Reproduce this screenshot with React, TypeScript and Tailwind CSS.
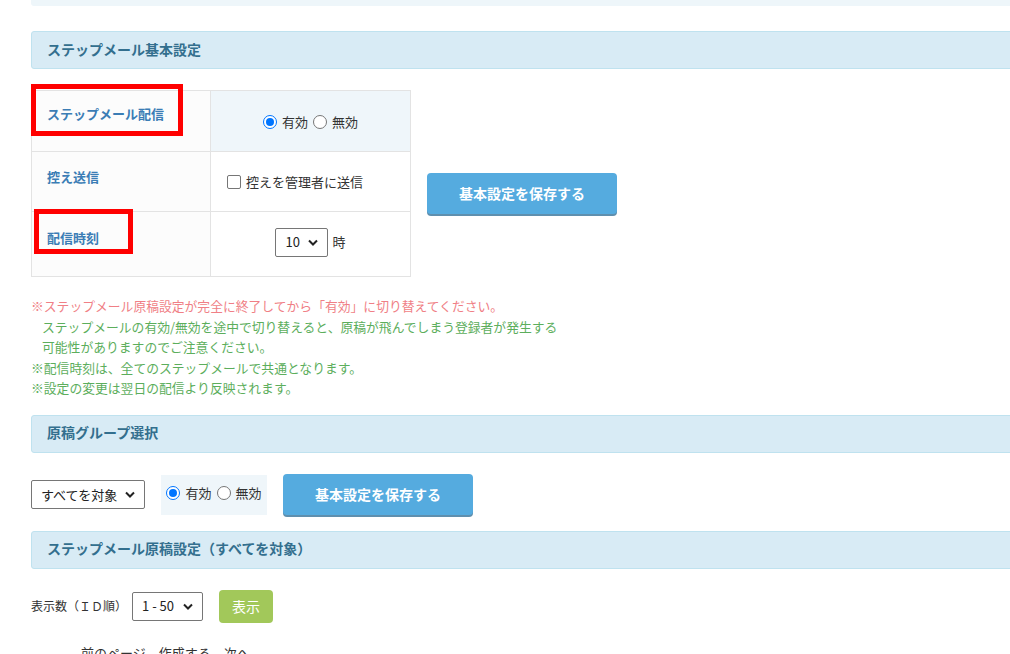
import { ReactNode } from "react";

const font = { fontFamily: '"Noto Sans CJK JP", "Noto Sans", sans-serif' };

function Radio({ checked }: { checked?: boolean }) {
  return checked ? (
    <span className="inline-block shrink-0 w-[14px] h-[14px] rounded-full border-[1px] border-[#0075ff] bg-white relative">
      <span className="absolute inset-[2px] rounded-full bg-[#0075ff]" />
    </span>
  ) : (
    <span className="inline-block shrink-0 w-[14px] h-[14px] rounded-full border border-[#767676] bg-white" />
  );
}

function RadioPair() {
  return (
    <div className="flex items-center text-[13px] text-[#333]">
      <Radio checked />
      <span className="ml-[5px] mr-[5px]">有効</span>
      <Radio />
      <span className="ml-[5px]">無効</span>
    </div>
  );
}

function Chevron() {
  return (
    <svg width="10" height="7" viewBox="0 0 10 7" className="ml-auto">
      <path d="M1 1.5 L5 5.5 L9 1.5" fill="none" stroke="#222" strokeWidth="2" />
    </svg>
  );
}

function FakeSelect({ label, w }: { label: string; w: string }) {
  return (
    <div
      className={`${w} h-[29px] flex items-center border border-[#767676] rounded-[2px] bg-white px-[9px] text-[13px] text-[#222]`}
    >
      <span>{label}</span>
      <Chevron />
    </div>
  );
}

function Header({ children }: { children: ReactNode }) {
  return (
    <div className="h-[38px] flex items-center pl-[15px] pb-[2px] bg-[#d8ebf5] border border-[#bfe2ef] rounded-[3px] text-[14px] font-bold text-[#336f8e]">
      {children}
    </div>
  );
}

function SaveButton() {
  return (
    <button className="w-[190px] h-[41px] rounded-[4px] bg-[#55abdf] shadow-[0_2px_0_#5f8fae] text-white text-[14px] font-bold">
      基本設定を保存する
    </button>
  );
}

export default function App() {
  return (
    <div className="w-[1010px] h-[654px] overflow-hidden bg-white" style={font}>
      <div className="w-[1050px] pl-[31px]">
        {/* top panel remainder */}
        <div className="h-[6px] bg-[#eef6fa] rounded-b-[3px]" />

        <div className="mt-[25px]">
          <Header>ステップメール基本設定</Header>
        </div>

        {/* basic settings */}
        <div className="flex mt-[21px]">
          <div className="relative">
            <table className="border-collapse text-[13px]">
              <tbody>
                <tr className="h-[61px]">
                  <td className="w-[179px] border border-[#e3e3e3] bg-[#fcfcfc] pl-[15px] font-bold text-[#3b7db5] align-middle">
                    <span className="relative top-[-7px]">ステップメール配信</span>
                  </td>
                  <td className="w-[200px] border border-[#e3e3e3] bg-[#eff6fa]">
                    <div className="flex justify-center mt-[2px]">
                      <RadioPair />
                    </div>
                  </td>
                </tr>
                <tr className="h-[60px]">
                  <td className="border border-[#e3e3e3] bg-[#fcfcfc] pl-[15px] font-bold text-[#3b7db5]">
                    <span className="relative top-[-5px]">控え送信</span>
                  </td>
                  <td className="border border-[#e3e3e3] bg-white text-[#333]">
                    <div className="flex items-center gap-[5px] pl-[16px] mt-[1px]">
                      <span className="inline-block w-[14px] h-[14px] border border-[#767676] rounded-[2px] bg-white" />
                      <span>控えを管理者に送信</span>
                    </div>
                  </td>
                </tr>
                <tr className="h-[65px]">
                  <td className="border border-[#e3e3e3] bg-[#fcfcfc] pl-[15px] font-bold text-[#3b7db5]">
                    <span className="relative top-[-6px]">配信時刻</span>
                  </td>
                  <td className="border border-[#e3e3e3] bg-white text-[#333]">
                    <div className="flex items-center justify-center gap-[4px] mt-[-4px]">
                      <FakeSelect label="10" w="w-[53px]" />
                      <span>時</span>
                    </div>
                  </td>
                </tr>
              </tbody>
            </table>
            {/* highlight boxes */}
            <div className="absolute left-0 top-[-6px] w-[152px] h-[52px] border-[5px] border-[#ff0000]" />
            <div className="absolute left-[3px] top-[119px] w-[99px] h-[45px] border-[5px] border-[#ff0000]" />
          </div>
          <div className="ml-[16px] mt-[83px]">
            <SaveButton />
          </div>
        </div>

        {/* notes */}
        <div className="mt-[19px] text-[12.8px] leading-[20.5px] text-[#5cae5c]">
          <p className="text-[#f07f86]">※ステップメール原稿設定が完全に終了してから「有効」に切り替えてください。</p>
          <p className="pl-[11px]">ステップメールの有効/無効を途中で切り替えると、原稿が飛んでしまう登録者が発生する</p>
          <p className="pl-[11px]">可能性がありますのでご注意ください。</p>
          <p>※配信時刻は、全てのステップメールで共通となります。</p>
          <p>※設定の変更は翌日の配信より反映されます。</p>
        </div>

        <div className="mt-[16px]">
          <Header>原稿グループ選択</Header>
        </div>

        <div className="flex items-center mt-[21px] h-[42px]">
          <FakeSelect label="すべてを対象" w="w-[114px]" />
          <div className="ml-[16px] w-[106px] h-[40px] bg-[#eff6fa] flex items-center justify-center">
            <div className="mt-[-3px]">
              <RadioPair />
            </div>
          </div>
          <div className="ml-[16px]">
            <SaveButton />
          </div>
        </div>

        <div className="mt-[15px]">
          <Header>ステップメール原稿設定（すべてを対象）</Header>
        </div>

        <div className="flex items-center mt-[21px] h-[33px] text-[12px] text-[#333]">
          <span>表示数（ＩＤ順）</span>
          <div className="ml-[5px]">
            <FakeSelect label="1 - 50" w="w-[71px]" />
          </div>
          <button className="ml-[16px] w-[54px] h-[33px] rounded-[4px] bg-[#a2c85a] text-white text-[14px]">
            表示
          </button>
        </div>

        <div className="mt-[20px] pl-[50px] text-[13px] text-[#333] whitespace-nowrap">
          前のページ　作成する　次へ
        </div>
      </div>
    </div>
  );
}
